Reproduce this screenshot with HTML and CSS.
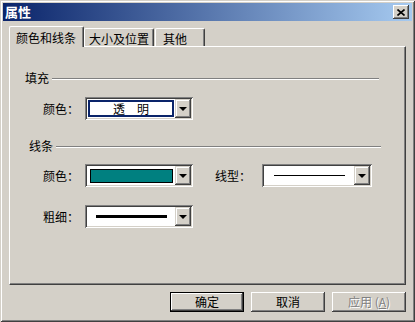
FILE: index.html
```html
<!DOCTYPE html>
<html lang="zh">
<head>
<meta charset="utf-8">
<title>属性</title>
<link rel="stylesheet" href="styles.css">
</head>
<body>
<div class="window">
  <div class="titlebar">
    <span class="title">属性</span>
    <span class="close"><svg width="8" height="7" viewBox="0 0 8 7"><path d="M0.5 0.5 L7.5 6.5 M7.5 0.5 L0.5 6.5" stroke="#000" stroke-width="1.6" fill="none"/></svg></span>
  </div>
  <div class="content">
    <div class="tabs">
      <div class="tab tab-1 active">颜色和线条</div>
      <div class="tab tab-2">大小及位置</div>
      <div class="tab tab-3">其他</div>
    </div>
    <div class="panel">
      <div class="group group-fill"><span>填充</span><i class="etch"></i></div>
      <div class="row row-1">
        <span class="label">颜色<span class="colon">：</span></span>
        <div class="combo">
          <div class="value"><div class="selected">透　明</div></div>
          <div class="drop"><i class="tri"></i></div>
        </div>
      </div>
      <div class="group group-line"><span>线条</span><i class="etch"></i></div>
      <div class="row row-2">
        <span class="label">颜色<span class="colon">：</span></span>
        <div class="combo">
          <div class="value pad"><div class="swatch"></div></div>
          <div class="drop"><i class="tri"></i></div>
        </div>
        <span class="label label-wide">线型<span class="colon">：</span></span>
        <div class="combo combo-wide">
          <div class="value pad"><div class="stroke thin"></div></div>
          <div class="drop"><i class="tri"></i></div>
        </div>
      </div>
      <div class="row row-3">
        <span class="label">粗细<span class="colon">：</span></span>
        <div class="combo">
          <div class="value pad"><div class="stroke thick"></div></div>
          <div class="drop"><i class="tri"></i></div>
        </div>
      </div>
    </div>
    <div class="buttons">
      <div class="btn default">确定</div>
      <div class="btn">取消</div>
      <div class="btn disabled">应用 (<u>A</u>)</div>
    </div>
  </div>
</div>
</body>
</html>
```
FILE: styles.css
```css
* { box-sizing: border-box; margin: 0; padding: 0; }
html, body { width: 415px; height: 322px; overflow: hidden; }
body {
  background: #d4d0c8;
  font: 12px/14px "Noto Sans CJK SC", "Noto Sans", sans-serif;
  color: #000;
}
.window {
  width: 415px;
  height: 322px;
  padding: 3px;
  display: flex;
  flex-direction: column;
  box-shadow: inset 1px 1px #d4d0c8, inset -1px -1px #404040, inset 2px 2px #fff, inset -2px -2px #808080;
}
.titlebar {
  height: 18px;
  display: flex;
  align-items: center;
  justify-content: space-between;
  padding: 0 3px 0 2px;
  background: linear-gradient(to right, #0a246a, #a6caf0);
}
.title { color: #fff; font-weight: bold; font-size: 13px; line-height: 14px; }
.close {
  width: 16px;
  height: 14px;
  display: flex;
  align-items: center;
  justify-content: center;
  background: #d4d0c8;
  box-shadow: inset -1px -1px #404040, inset 1px 1px #fff, inset -2px -2px #808080;
}
.content {
  flex: 1;
  display: flex;
  flex-direction: column;
  padding: 5px 6px 0 6px;
}
.tabs {
  height: 20px;
  display: flex;
  align-items: flex-end;
}
.tab {
  height: 18px;
  line-height: 16px;
  padding-top: 2px;
  border-left: 1px solid #fff;
  border-top: 1px solid #fff;
  border-right: 1px solid #404040;
  box-shadow: inset -1px 0 #808080;
  border-radius: 2px 2px 0 0;
  background: #d4d0c8;
  white-space: nowrap;
}
.tab.active {
  height: 21px;
  margin-bottom: -1px;
  position: relative;
  z-index: 1;
  padding-top: 3px;
}
.tab-1 { width: 75px; padding-left: 6px; }
.tab-2 { width: 70px; padding-left: 4px; }
.tab-3 { width: 50px; padding-left: 7px; margin-left: 1px; }
.panel {
  width: 397px;
  height: 239px;
  border-top: 1px solid #fff;
  border-left: 1px solid #fff;
  border-right: 1px solid #404040;
  border-bottom: 1px solid #404040;
  box-shadow: inset -1px -1px #808080;
  display: flex;
  flex-direction: column;
}
.group {
  height: 14px;
  display: flex;
  align-items: center;
}
.group-fill { margin-top: 24px; padding-left: 15px; margin-right: 26px; }
.group-line { margin-top: 19px; padding-left: 19px; margin-right: 24px; }
.etch {
  flex: 1;
  height: 2px;
  margin-left: 3px;
  margin-top: 2px;
  border-top: 1px solid #808080;
  border-bottom: 1px solid #fff;
}
.row {
  display: flex;
  align-items: center;
  padding-left: 33px;
}
.row-1 { margin-top: 12px; }
.row-2 { margin-top: 11px; }
.row-3 { margin-top: 18px; }
.label { width: 42px; white-space: nowrap; }
.colon { font-family: "Noto Sans CJK TC", "Noto Sans CJK JP", sans-serif; }
.label-wide { width: 47px; margin-left: 22px; }
.combo {
  width: 108px;
  height: 23px;
  display: flex;
  padding: 2px;
  background: #fff;
  box-shadow: inset 1px 1px #808080, inset -1px -1px #fff, inset 2px 2px #404040, inset -2px -2px #d4d0c8;
}
.combo-wide { width: 110px; }
.value {
  flex: 1;
  display: flex;
  align-items: center;
  justify-content: center;
  padding: 1px;
}
.value.pad { padding: 2px 2px 2px 3px; }
.selected {
  width: 100%;
  height: 100%;
  border: 2px solid #0a246a;
  background: #fff;
  text-align: center;
  line-height: 13px;
}
.swatch {
  width: 100%;
  height: 14px;
  border: 1px solid #000;
  background: #008080;
}
.stroke { width: 71px; background: #000; }
.stroke.thin { height: 1px; }
.stroke.thick { height: 3px; }
.drop {
  width: 16px;
  height: 19px;
  display: flex;
  align-items: center;
  justify-content: center;
  background: #d4d0c8;
  box-shadow: inset -1px -1px #404040, inset 1px 1px #d4d0c8, inset -2px -2px #808080, inset 2px 2px #fff;
}
.tri {
  width: 0;
  height: 0;
  border-left: 4px solid transparent;
  border-right: 4px solid transparent;
  border-top: 4px solid #000;
  margin-top: 1px;
}
.buttons {
  display: flex;
  justify-content: flex-end;
  gap: 7px;
  margin-top: 7px;
}
.btn {
  width: 74px;
  height: 20px;
  display: flex;
  align-items: center;
  justify-content: center;
  background: #d4d0c8;
  box-shadow: inset -1px -1px #404040, inset 1px 1px #fff, inset -2px -2px #808080, inset 2px 2px #d4d0c8;
}
.btn.default {
  border: 1px solid #000;
  box-shadow: inset -1px -1px #404040, inset 1px 1px #fff, inset -2px -2px #808080;
}
.btn.disabled { color: #808080; text-shadow: 1px 1px #fff; }
.btn.disabled u { text-decoration: underline; }
```
